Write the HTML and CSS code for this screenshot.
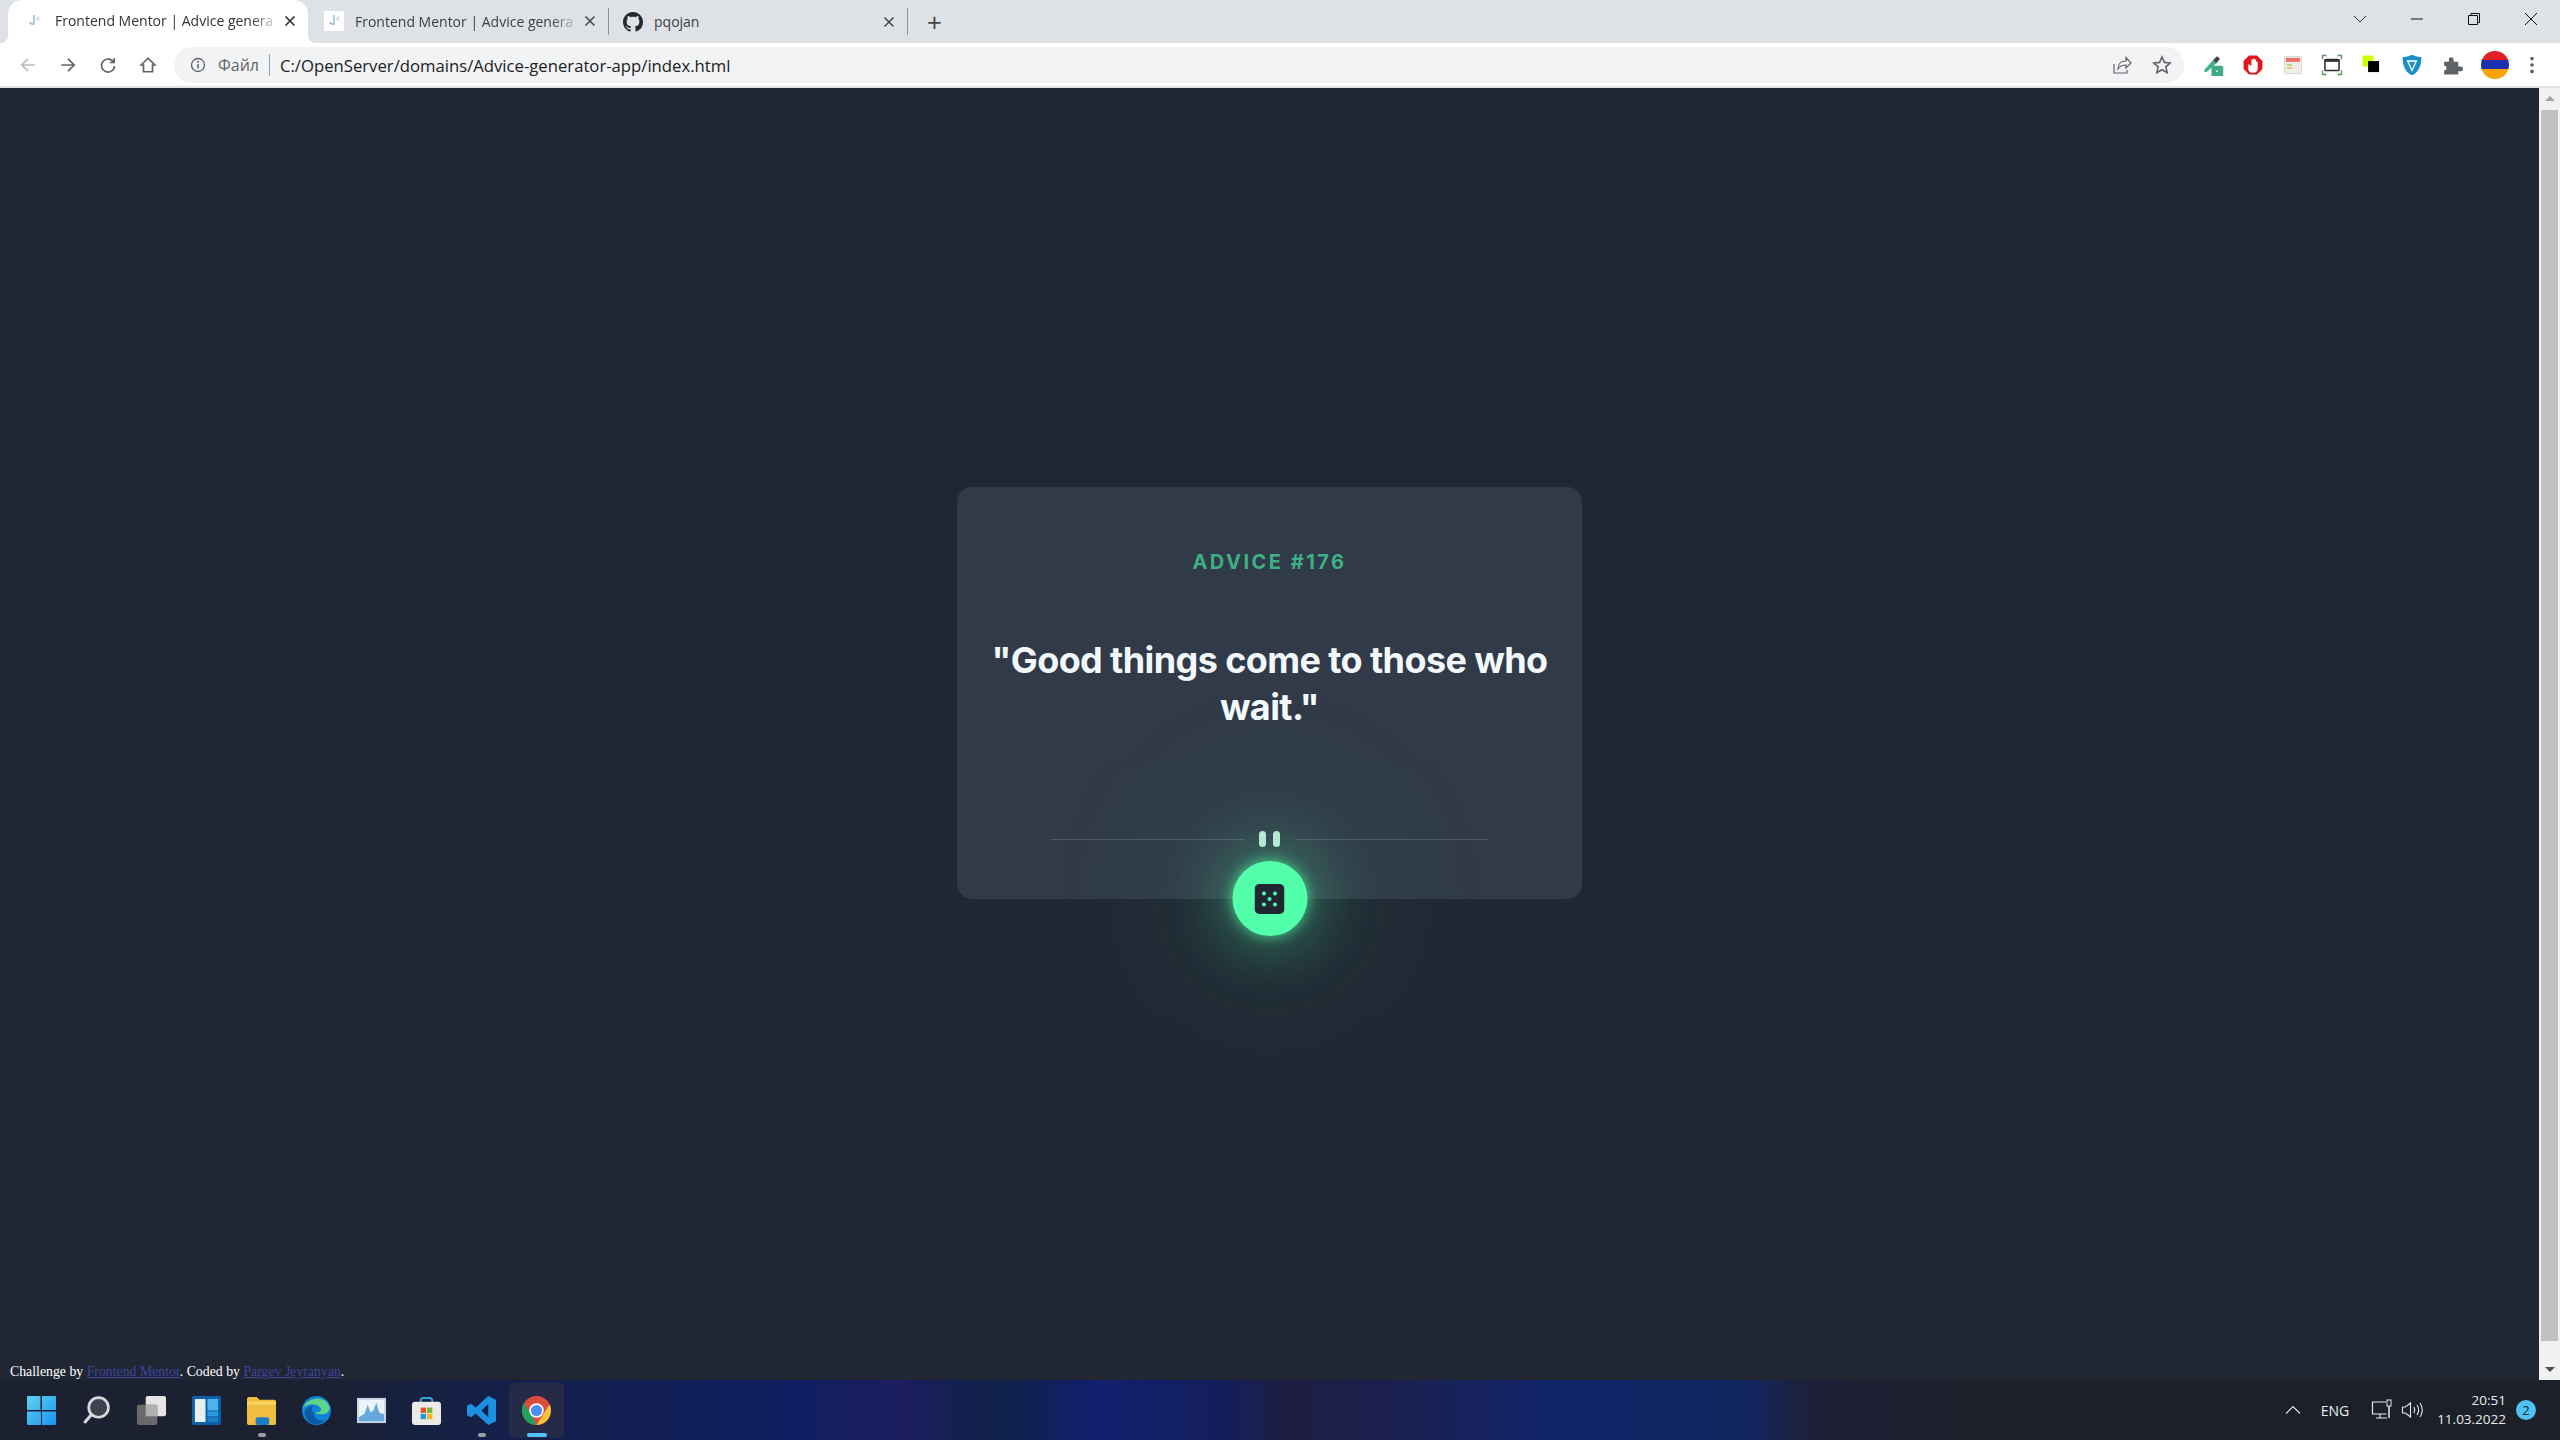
FILE: index.html
```html
<!DOCTYPE html>
<html lang="en">
<head>
  <meta charset="UTF-8">
  <title>Frontend Mentor | Advice generator app</title>
  <link rel="stylesheet" href="styles.css">
</head>
<body>

<div class="window">
  <!-- tab strip -->
  <div class="tabstrip">
    <div class="tab tab-active">
      <svg class="tab-icon" viewBox="0 0 20 20"><path d="M10 4v9c-2 .5-3.500 0-4.500-2" fill="none" stroke="#7fb6c8" stroke-width="1.300"/><path d="M12.500 8l3-2M12.500 8l3 1.500" fill="none" stroke="#c9ccd0" stroke-width="1.100"/></svg>
      <span class="tab-title">Frontend Mentor | Advice genera</span>
      <svg class="tab-close" viewBox="0 0 12 12"><path d="M1.500 1.500l9 9M10.500 1.500l-9 9" stroke="#333" stroke-width="1.700"/></svg>
    </div>
    <div class="tab">
      <svg class="tab-icon tab-icon-white" viewBox="0 0 20 20"><path d="M10 4v9c-2 .5-3.500 0-4.500-2" fill="none" stroke="#7fb6c8" stroke-width="1.300"/><path d="M12.500 8l3-2M12.500 8l3 1.500" fill="none" stroke="#c9ccd0" stroke-width="1.100"/></svg>
      <span class="tab-title">Frontend Mentor | Advice genera</span>
      <svg class="tab-close" viewBox="0 0 12 12"><path d="M1.500 1.500l9 9M10.500 1.500l-9 9" stroke="#444" stroke-width="1.500"/></svg>
    </div>
    <div class="tab tab-sep">
      <svg class="tab-icon" viewBox="0 0 16 16"><path fill="#24292f" d="M8 0C3.58 0 0 3.58 0 8c0 3.54 2.29 6.53 5.47 7.59.4.07.55-.17.55-.38 0-.19-.01-.82-.01-1.49-2.01.37-2.53-.49-2.69-.94-.09-.23-.48-.94-.82-1.13-.28-.15-.68-.52-.01-.53.63-.01 1.08.58 1.23.82.72 1.21 1.87.87 2.33.66.07-.52.28-.87.51-1.07-1.78-.2-3.64-.89-3.64-3.95 0-.87.31-1.59.82-2.15-.08-.2-.36-1.02.08-2.12 0 0 .67-.21 2.2.82.64-.18 1.32-.27 2-.27s1.36.09 2 .27c1.53-1.04 2.2-.82 2.2-.82.44 1.1.16 1.92.08 2.12.51.56.82 1.27.82 2.15 0 3.07-1.87 3.75-3.65 3.95.29.25.54.73.54 1.48 0 1.07-.01 1.93-.01 2.2 0 .21.15.46.55.38A8.01 8.01 0 0 0 16 8c0-4.42-3.58-8-8-8z"/></svg>
      <span class="tab-title">pqojan</span>
      <svg class="tab-close" viewBox="0 0 12 12"><path d="M1.500 1.500l9 9M10.500 1.500l-9 9" stroke="#444" stroke-width="1.500"/></svg>
    </div>
    <div class="tab-new">+</div>
    <div class="window-controls">
      <svg viewBox="0 0 16 16"><path d="M2 5l6 6 6-6" fill="none" stroke="#333" stroke-width="1"/></svg>
      <svg viewBox="0 0 16 16"><path d="M2 8h12" stroke="#111" stroke-width="1"/></svg>
      <svg viewBox="0 0 16 16"><path d="M2.500 4.500h9v9h-9zM5 4.500V2.500h8.500v9h-2" fill="none" stroke="#111" stroke-width="1"/></svg>
      <svg viewBox="0 0 16 16"><path d="M2 2l12 12M14 2L2 14" stroke="#111" stroke-width="1"/></svg>
    </div>
  </div>

  <!-- toolbar -->
  <div class="toolbar">
    <svg class="nav-icon" viewBox="0 0 16 16"><path d="M14 8H2.500M8 2.500L2.500 8 8 13.500" fill="none" stroke="#bbb" stroke-width="1.500"/></svg>
    <svg class="nav-icon" viewBox="0 0 16 16"><path d="M2 8h11.500M8 2.500L13.500 8 8 13.500" fill="none" stroke="#5f6368" stroke-width="1.500"/></svg>
    <svg class="nav-icon" viewBox="0 0 16 16"><path d="M13 5.500A5.800 5.800 0 1 0 13.800 9M13.500 1.800v4h-4" fill="none" stroke="#5f6368" stroke-width="1.500"/></svg>
    <svg class="nav-icon" viewBox="0 0 16 16"><path d="M8 2L2 8h2v6h8V8h2z" fill="none" stroke="#5f6368" stroke-width="1.500"/></svg>
    <div class="omnibox">
      <svg class="info-icon" viewBox="0 0 16 16"><circle cx="8" cy="8" r="6.500" fill="none" stroke="#5f6368" stroke-width="1.300"/><path d="M8 7v4.500" stroke="#5f6368" stroke-width="1.500"/><circle cx="8" cy="4.800" r="1" fill="#5f6368"/></svg>
      <span class="omni-label">Файл</span>
      <span class="omni-url">C:/OpenServer/domains/Advice-generator-app/index.html</span>
      <svg class="omni-action" viewBox="0 0 20 20"><path d="M2 9v9h13v-3M6 14c0-5 3-8 8-8V2.500l5 5.500-5 5V10c-4 0-6 1-8 4z" fill="none" stroke="#5f6368" stroke-width="1.200"/></svg>
      <svg class="omni-action" viewBox="0 0 20 20"><path d="M10 2l2.400 5.400 5.800.6-4.400 3.900 1.300 5.800-5.100-3-5.100 3 1.300-5.800L1.800 8l5.800-.6z" fill="none" stroke="#5f6368" stroke-width="1.600"/></svg>
    </div>
    <div class="extensions">
      <svg viewBox="0 0 28 28"><path d="M3 20L14 8l4 4L6 23H3z" fill="#44b08c"/><path d="M14 8l5-5 4 3-5 6z" fill="#444"/><rect x="12" y="15" width="15" height="15" rx="2" fill="#41ab84"/><rect x="18" y="21" width="2" height="2" fill="#fff"/></svg>
      <svg viewBox="0 0 28 28"><path d="M9 2h10l7 7v10l-7 7H9l-7-7V9z" fill="#e0161b"/><path d="M8 13v6c0 3 3 5 6 5s6-2 6-5v-9h-2v5V7h-2v7V6h-2v8V7h-2v8z" fill="#fff"/></svg>
      <svg viewBox="0 0 28 28"><rect x="3" y="3" width="22" height="22" rx="2" fill="#f1ede8" stroke="#ccc"/><rect x="5" y="5" width="18" height="5" fill="#ee6e6e"/><rect x="6" y="13" width="7" height="2" fill="#a8d070"/><rect x="6" y="17" width="7" height="2" fill="#e0c070"/></svg>
      <svg viewBox="0 0 28 28"><path d="M2 7V2h5M21 2h5v5M26 21v5h-5M7 26H2v-5" fill="none" stroke="#5a9a5a" stroke-width="1.800"/><rect x="5" y="7" width="18" height="14" rx="1" fill="none" stroke="#333" stroke-width="2"/><rect x="5" y="7" width="18" height="3" fill="#333"/></svg>
      <svg viewBox="0 0 28 28"><rect x="2" y="2" width="14" height="14" fill="#ccff00"/><rect x="9" y="9" width="14" height="14" fill="#000"/></svg>
      <svg viewBox="0 0 28 28"><path d="M14 1c4 2 8 3 12 3 0 10-3 19-12 23C5 23 2 14 2 4c4 0 8-1 12-3z" fill="#1b8fc9"/><path d="M7 8h14l-7 15z" fill="#fff"/><path d="M10 10h8l-4 9z" fill="#1b8fc9"/></svg>
      <svg viewBox="0 0 28 28"><path d="M4 10h6V7a3 3 0 0 1 6 0v3h6v6h3a3 3 0 0 1 0 6h-3v4H4v-5a3 3 0 0 0 0-6z" fill="#5f6368"/></svg>
      <div class="profile"></div>
      <svg class="menu-dots" viewBox="0 0 8 24"><circle cx="4" cy="5" r="2" fill="#5f6368"/><circle cx="4" cy="12" r="2" fill="#5f6368"/><circle cx="4" cy="19" r="2" fill="#5f6368"/></svg>
    </div>
  </div>

  <!-- page + scrollbar -->
  <div class="viewport">
    <main class="page">
      <div class="card">
        <p class="advice-id">ADVICE #176</p>
        <h1 class="advice-text">"Good things come to those who wait."</h1>
        <div class="divider">
          <span class="divider-line"></span>
          <span class="pause"><i></i><i></i></span>
          <span class="divider-line"></span>
        </div>
        <button class="dice-btn">
          <svg viewBox="0 0 30 30"><rect width="30" height="30" rx="5" fill="#202733"/><circle cx="9.500" cy="9.500" r="2" fill="#53ffaa"/><circle cx="20.500" cy="9.500" r="2" fill="#53ffaa"/><circle cx="15" cy="15" r="2" fill="#53ffaa"/><circle cx="9.500" cy="20.500" r="2" fill="#53ffaa"/><circle cx="20.500" cy="20.500" r="2" fill="#53ffaa"/></svg>
        </button>
      </div>
      <footer class="attribution">
        Challenge by <a href="#">Frontend Mentor</a>. Coded by <a href="#">Pargev Jeyranyan</a>.
      </footer>
    </main>
    <div class="scrollbar">
      <div class="scroll-btn"><span class="arrow-up"></span></div>
      <div class="scroll-thumb"></div>
      <div class="scroll-btn"><span class="arrow-down"></span></div>
    </div>
  </div>

  <!-- windows taskbar -->
  <div class="taskbar">
    <div class="task-icons">
      <div class="task-item"><svg viewBox="0 0 28 28"><defs><linearGradient id="win" x1="0" y1="0" x2="1" y2="1"><stop offset="0" stop-color="#5ed2f2"/><stop offset="1" stop-color="#1a93f0"/></linearGradient></defs><path fill="url(#win)" d="M0 1a1 1 0 0 1 1-1h12v13.500H0zM14.500 0H27a1 1 0 0 1 1 1v12.500H14.500zM0 15h13.500v13H1a1 1 0 0 1-1-1zM14.500 15H28v12a1 1 0 0 1-1 1H14.500z"/></svg></div>
      <div class="task-item"><svg viewBox="0 0 28 28"><circle cx="16" cy="11" r="9.500" fill="#3c4350" stroke="#d8d8d8" stroke-width="2.600"/><path d="M9 18l-6 7" stroke="#d8d8d8" stroke-width="3" stroke-linecap="round"/></svg></div>
      <div class="task-item"><svg viewBox="0 0 30 30"><rect x="9" y="0" width="21" height="21" rx="2" fill="#e4e4e4"/><rect x="0" y="9" width="21" height="21" rx="2" fill="#6a6a6a"/><rect x="9" y="9" width="12" height="12" fill="#b0b0b0"/></svg></div>
      <div class="task-item"><svg viewBox="0 0 30 30"><rect width="30" height="30" rx="2" fill="#0d5fa8"/><rect x="3" y="3" width="11" height="24" rx="1" fill="#e8eef4"/><rect x="16" y="3" width="11" height="12" fill="#4db3ee"/><rect x="16" y="16" width="11" height="5" fill="#2b9be0"/><rect x="16" y="22" width="11" height="5" fill="#1a7fc8"/></svg></div>
      <div class="task-item has-dot"><svg viewBox="0 0 30 30"><path d="M0 3a2 2 0 0 1 2-2h8l3 3h15a2 2 0 0 1 2 2v22a2 2 0 0 1-2 2H2a2 2 0 0 1-2-2z" fill="#f0bd3e"/><path d="M0 6h30v3H0z" fill="#f9d865"/><rect x="9" y="22" width="14" height="8" rx="2" fill="#1a7fc8"/></svg></div>
      <div class="task-item"><svg viewBox="0 0 30 30"><circle cx="15" cy="15" r="15" fill="#1183d6"/><path d="M1 12C4 3 22-3 28 10c2 5-2 9-8 9-4 0-6-1-6-3 4 2 7-1 5-4C14 6 5 9 1 12z" fill="#5fd38a"/><path d="M12 17c0 6 6 10 12 8-3 3-7 5-12 4-7-2-10-9-9-14 2-3 5-5 9-5-3 2-2 5 0 7z" fill="#0c59a4"/></svg></div>
      <div class="task-item"><svg viewBox="0 0 30 30"><rect y="2" width="30" height="26" fill="#c8d4e0"/><rect x="2" y="4" width="26" height="22" fill="#eaf2fa"/><path d="M2 22l6-4 3-9 3 8 3-2 3-8 3 10 5 2v7H2z" fill="#66a8dc"/></svg></div>
      <div class="task-item"><svg viewBox="0 0 30 30"><path d="M9 8V5a3 3 0 0 1 3-3h6a3 3 0 0 1 3 3v3" fill="none" stroke="#2aa7dc" stroke-width="2"/><rect y="6" width="30" height="24" rx="3" fill="#eceae6"/><rect x="9" y="12" width="5.500" height="5.500" fill="#e8532d"/><rect x="15.500" y="12" width="5.500" height="5.500" fill="#7cb82f"/><rect x="9" y="18.500" width="5.500" height="5.500" fill="#1c9ce0"/><rect x="15.500" y="18.500" width="5.500" height="5.500" fill="#f5b90f"/></svg></div>
      <div class="task-item has-dot"><svg viewBox="0 0 30 30"><path d="M22 0l8 4v22l-8 4-13-12-5 4-4-2v-10l4-2 5 4zM22 8l-7 7 7 7z" fill="#1e90e0"/></svg></div>
      <div class="task-item task-active"><svg viewBox="0 0 30 30"><circle cx="15" cy="15" r="15" fill="#dd4b3e"/><path d="M15 30A15 15 0 0 1 2 7.500L9 19z" fill="#1da462"/><path d="M15 30l7-11 6.500-10.500A15 15 0 0 1 15 30z" fill="#f8c33c"/><circle cx="15" cy="15" r="7.500" fill="#fff"/><circle cx="15" cy="15" r="5.800" fill="#4a8cf0"/></svg></div>
    </div>
    <div class="tray">
      <svg class="tray-chevron" viewBox="0 0 16 10"><path d="M1 8.500L8 1.500l7 7" fill="none" stroke="#e8e8e8" stroke-width="1.100"/></svg>
      <span class="tray-lang">ENG</span>
      <svg class="tray-icon" viewBox="0 0 22 22"><path d="M15 3H1.500v12h14M5 19h11M9 15v4" fill="none" stroke="#e8e8e8" stroke-width="1.200"/><rect x="16" y="1" width="4" height="6" fill="none" stroke="#e8e8e8"/><path d="M18 7v12" stroke="#e8e8e8" stroke-width="1.500"/></svg>
      <svg class="tray-icon" viewBox="0 0 22 22"><path d="M1.500 8v6h3l5 4V4l-5 4zM13 8c1 2 1 4 0 6M16 6c2 3 2 7 0 10M19 4c3 4 3 10 0 14" fill="none" stroke="#e8e8e8" stroke-width="1.100"/></svg>
      <div class="tray-clock"><span>20:51</span><span>11.03.2022</span></div>
      <span class="tray-badge">2</span>
    </div>
  </div>
</div>

</body>
</html>
```

FILE: styles.css
```css
* {
  box-sizing: border-box;
}
body {
  margin: 0;
  font-family: "Open Sans", "Noto Sans", sans-serif;
}
.window {
  display: flex;
  flex-direction: column;
  height: 1440px;
  overflow: hidden;
}

/* tab strip */
.tabstrip {
  display: flex;
  align-items: flex-end;
  height: 43px;
  padding-left: 8px;
  background: #dee1e6;
  flex: none;
}
.tab {
  display: flex;
  align-items: center;
  gap: 11px;
  width: 300px;
  height: 37px;
  padding: 0 12px 7px 16px;
  font-size: 14px;
  color: #3c4043;
}
.tab-active {
  position: relative;
  height: 43px;
  padding-bottom: 2px;
  background: #fff;
  border-radius: 14px 14px 0 0;
  color: #333;
}
/* flared bottom corners of the active tab */
.tab-active::before,
.tab-active::after {
  content: "";
  position: absolute;
  bottom: 0;
  width: 8px;
  height: 8px;
}
.tab-active::before {
  left: -8px;
  background: radial-gradient(circle at 0 0, transparent 8px, #fff 8.500px);
}
.tab-active::after {
  right: -8px;
  background: radial-gradient(circle at 100% 0, transparent 8px, #fff 8.500px);
}
.tab-sep {
  border-left: 1px solid #8f9194;
  border-right: 1px solid #8f9194;
  width: 300px;
  height: 27px;
  margin-bottom: 8px;
  padding: 0 12px 0 14px;
}
.tab-icon {
  width: 20px;
  height: 20px;
  flex: none;
}
.tab-icon-white {
  background: #fff;
}
.tab-title {
  flex: 1;
  overflow: hidden;
  white-space: nowrap;
}
.tab:not(.tab-sep) .tab-title {
  -webkit-mask-image: linear-gradient(to right, #000 90%, rgba(0, 0, 0, .25) 100%);
  mask-image: linear-gradient(to right, #000 90%, rgba(0, 0, 0, .25) 100%);
}
.tab-close {
  width: 12px;
  height: 12px;
  flex: none;
}
.tab-new {
  align-self: center;
  margin-left: 19px;
  font-size: 26px;
  line-height: 26px;
  color: #444;
}
.window-controls {
  display: flex;
  align-items: center;
  gap: 41px;
  align-self: flex-start;
  margin-left: auto;
  height: 37px;
  padding-right: 21px;
}
.window-controls svg {
  width: 16px;
  height: 16px;
}

/* toolbar */
.toolbar {
  display: flex;
  align-items: center;
  height: 45px;
  padding: 1px 4px 0 19px;
  background: #fff;
  border-bottom: 2px solid #dfe1e5;
  flex: none;
}
.nav-icon {
  width: 18px;
  height: 18px;
  margin-right: 22px;
}
.omnibox {
  display: flex;
  align-items: center;
  width: 2010px;
  height: 36px;
  margin-left: -5px;
  padding: 0 12px 0 16px;
  background: #f1f3f4;
  border-radius: 18px;
}
.info-icon {
  width: 16px;
  height: 16px;
}
.omni-label {
  margin-left: 12px;
  padding-right: 10px;
  border-right: 1px solid #9aa0a6;
  font-size: 16px;
  color: #5f6368;
}
.omni-url {
  flex: 1;
  margin-left: 10px;
  font-size: 16.700px;
  color: #202124;
}
.omni-action {
  width: 20px;
  height: 20px;
  margin-left: 20px;
}
.extensions {
  display: flex;
  align-items: center;
  gap: 17.800px;
  margin-left: 18px;
}
.extensions svg {
  width: 22px;
  height: 22px;
}
.extensions .menu-dots {
  width: 8px;
  height: 22px;
  margin-left: 2px;
}
.profile {
  width: 28px;
  height: 28px;
  border-radius: 50%;
  background: linear-gradient(#e01e25 33%, #1b2fb0 33%, #1b2fb0 66%, #f8a400 66%);
}

/* page */
.viewport {
  display: flex;
  flex: 1;
  min-height: 0;
}
.page {
  display: flex;
  flex-direction: column;
  align-items: center;
  flex: 1;
  padding-top: 399px;
  background: #202733;
}
.card {
  position: relative;
  width: 625px;
  height: 412px;
  padding-top: 62px;
  background: #313a48;
  border-radius: 15px;
  text-align: center;
}
.advice-id {
  margin: 0;
  font-family: "Inter", sans-serif;
  font-size: 20px;
  font-weight: 700;
  line-height: 26px;
  letter-spacing: 2.500px;
  color: #3fb083;
}
.advice-text {
  margin: 62px 24px 0;
  font-family: "Inter", sans-serif;
  font-size: 36px;
  font-weight: 700;
  line-height: 47px;
  letter-spacing: -0.600px;
  color: #f3f8fd;
}
.divider {
  display: flex;
  align-items: center;
  justify-content: space-between;
  width: 437px;
  height: 16px;
  margin: 100px auto 0;
}
.divider-line {
  width: 193px;
  height: 1px;
  background: #4f5969;
}
.pause {
  display: flex;
  gap: 7px;
}
.pause i {
  display: block;
  width: 7px;
  height: 16px;
  background: #c3e8da;
  border-radius: 4px;
}
/* sits half over the card edge, glow washes over the divider */
.dice-btn {
  position: absolute;
  left: 50%;
  bottom: -37px;
  display: flex;
  align-items: center;
  justify-content: center;
  width: 75px;
  height: 75px;
  padding: 0;
  transform: translateX(-50%);
  background: #53ffaa;
  border: none;
  border-radius: 50%;
  box-shadow: 0 0 14px rgba(83, 255, 170, .75), 0 0 60px 12px rgba(83, 255, 170, .32), 0 0 170px 40px rgba(83, 255, 170, .14);
}
.dice-btn svg {
  width: 30px;
  height: 30px;
}
.attribution {
  margin-top: auto;
  align-self: flex-start;
  padding: 0 0 1px 10px;
  font-family: "Liberation Serif", serif;
  font-size: 13.800px;
  line-height: 15px;
  color: #fff;
}
.attribution a {
  color: #3d429e;
}

/* scrollbar */
.scrollbar {
  display: flex;
  flex-direction: column;
  width: 21px;
  background: #f1f1f1;
  flex: none;
}
.scroll-btn {
  display: flex;
  align-items: center;
  justify-content: center;
  height: 21px;
  flex: none;
}
.arrow-up {
  border: 5px solid transparent;
  border-top: 0;
  border-bottom: 5px solid #a3a3a3;
}
.arrow-down {
  border: 5px solid transparent;
  border-bottom: 0;
  border-top: 5px solid #505050;
}
.scroll-thumb {
  flex: 1;
  margin: 1px 2px 18px;
  background: #c1c1c1;
}

.taskbar {
  display: flex;
  align-items: center;
  justify-content: space-between;
  height: 60px;
  padding: 0 24px 0 14px;
  background: linear-gradient(to right, #1b2130 0, #1b2130 300px, #14204a 500px, #0f1f62 800px, #1c1d5e 900px, #0e2248 1000px, #111f70 1100px, #131f5c 1220px, #1e1e42 1290px, #1a2050 1400px, #12256a 1550px, #12265f 1750px, #1f1f38 1810px, #1d2028 2000px, #1c2029 2560px);
  flex: none;
}
.task-icons {
  display: flex;
  align-items: center;
}
.task-item {
  position: relative;
  display: flex;
  align-items: center;
  justify-content: center;
  width: 55px;
  height: 55px;
}
.task-item svg {
  width: 29px;
  height: 29px;
}
.task-active {
  background: #252b47;
  border-radius: 5px;
}
.task-active::after,
.has-dot::after {
  content: "";
  position: absolute;
  left: 50%;
  bottom: 1px;
  width: 8px;
  height: 4px;
  transform: translateX(-50%);
  background: #9a9fa8;
  border-radius: 2px;
}
.task-active::after {
  width: 20px;
  background: #4fc3f7;
}
.tray {
  display: flex;
  align-items: center;
  color: #ececec;
  font-family: "Open Sans", sans-serif;
  font-size: 14px;
}
.tray-chevron {
  width: 16px;
  height: 10px;
  margin-right: 20px;
}
.tray-lang {
  margin-right: 22px;
}
.tray-icon {
  width: 22px;
  height: 22px;
  margin-right: 8px;
}
.tray-clock {
  display: flex;
  flex-direction: column;
  align-items: flex-end;
  margin-left: 6px;
  font-size: 13.500px;
  line-height: 19px;
}
.tray-badge {
  display: flex;
  align-items: center;
  justify-content: center;
  width: 20px;
  height: 20px;
  margin-left: 10px;
  background: #4fc3f7;
  border-radius: 50%;
  font-size: 13px;
  color: #1c2230;
}
```
